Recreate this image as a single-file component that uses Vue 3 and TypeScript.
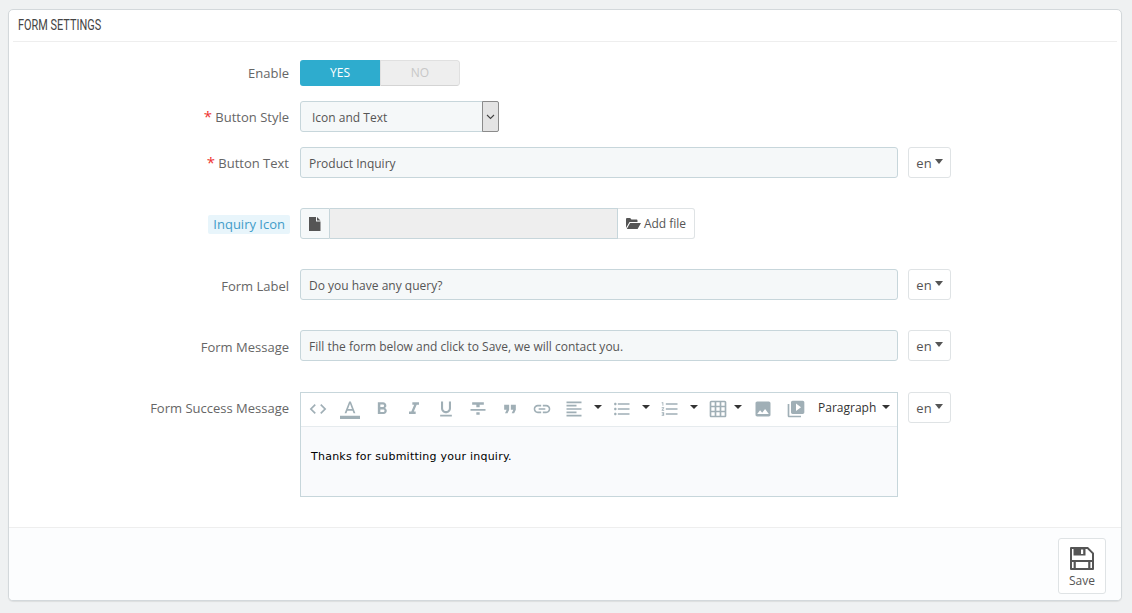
<script setup lang="ts">
interface Tool { name: string; d: string; kind: string }
const tools: Tool[] = [
  { name: 'code', kind: 'btn', d: 'M9.4 16.6L4.8 12l4.6-4.6L8 6l-6 6 6 6 1.4-1.4zm5.2 0l4.6-4.6-4.6-4.6L16 6l6 6-6 6-1.4-1.4z' },
  { name: 'color', kind: 'btn', d: 'M11 3L5.5 17h2.25l1.12-3h6.25l1.12 3h2.25L13 3h-2zm-1.38 9L12 5.67 14.38 12H9.62zM0 20h24v4H0z' },
  { name: 'bold', kind: 'btn', d: 'M15.6 10.79c.97-.67 1.65-1.77 1.65-2.79 0-2.26-1.75-4-4-4H7v14h7.04c2.09 0 3.71-1.7 3.71-3.79 0-1.52-.86-2.82-2.15-3.42zM10 6.5h3c.83 0 1.5.67 1.5 1.5s-.67 1.5-1.5 1.5h-3v-3zm3.5 9H10v-3h3.5c.83 0 1.5.67 1.5 1.5s-.67 1.5-1.5 1.5z' },
  { name: 'italic', kind: 'btn', d: 'M10 4v3h2.21l-3.42 8H6v3h8v-3h-2.21l3.42-8H18V4z' },
  { name: 'underline', kind: 'btn', d: 'M12 17c3.31 0 6-2.69 6-6V3h-2.5v8c0 1.93-1.57 3.5-3.5 3.5S8.5 12.93 8.5 11V3H6v8c0 3.31 2.69 6 6 6zm-7 2v2h14v-2H5z' },
  { name: 'strike', kind: 'btn', d: 'M10 19h4v-3h-4v3zM5 4v3h5v3h4V7h5V4H5zM3 14h18v-2H3v2z' },
  { name: 'quote', kind: 'btn', d: 'M6 17h3l2-4V7H5v6h3zm8 0h3l2-4V7h-6v6h3z' },
  { name: 'link', kind: 'btn', d: 'M3.9 12c0-1.71 1.39-3.1 3.1-3.1h4V7H7c-2.76 0-5 2.24-5 5s2.24 5 5 5h4v-1.9H7c-1.71 0-3.1-1.39-3.1-3.1zM8 13h8v-2H8v2zm9-6h-4v1.9h4c1.71 0 3.1 1.39 3.1 3.1s-1.39 3.1-3.1 3.1h-4V17h4c2.76 0 5-2.24 5-5s-2.24-5-5-5z' },
  { name: 'align', kind: 'btn caret', d: 'M15 15H3v2h12v-2zm0-8H3v2h12V7zM3 13h18v-2H3v2zm0 8h18v-2H3v2zM3 3v2h18V3H3z' },
  { name: 'bullets', kind: 'btn caret', d: 'M4 10.5c-.83 0-1.5.67-1.5 1.5s.67 1.5 1.5 1.5 1.5-.67 1.5-1.5-.67-1.5-1.5-1.5zm0-6c-.83 0-1.5.67-1.5 1.5S3.17 7.5 4 7.5 5.5 6.83 5.5 6 4.83 4.5 4 4.5zm0 12c-.83 0-1.5.68-1.5 1.5s.68 1.5 1.5 1.5 1.5-.68 1.5-1.5-.67-1.5-1.5-1.5zM7 19h14v-2H7v2zm0-6h14v-2H7v2zm0-8v2h14V5H7z' },
  { name: 'numbers', kind: 'btn caret', d: 'M2 17h2v.5H3v1h1v.5H2v1h3v-4H2v1zm1-9h1V4H2v1h1v3zm-1 3h1.8L2 13.1v.9h3v-1H3.2L5 10.9V10H2v1zm5-6v2h14V5H7zm0 14h14v-2H7v2zm0-6h14v-2H7v2z' },
  { name: 'table', kind: 'btn caret-narrow', d: 'M20 2H4c-1.1 0-2 .9-2 2v16c0 1.1.9 2 2 2h16c1.1 0 2-.9 2-2V4c0-1.1-.9-2-2-2zM8 20H4v-4h4v4zm0-6H4v-4h4v4zm0-6H4V4h4v4zm6 12h-4v-4h4v4zm0-6h-4v-4h4v4zm0-6h-4V4h4v4zm6 12h-4v-4h4v4zm0-6h-4v-4h4v4zm0-6h-4V4h4v4z' },
  { name: 'image', kind: 'btn push', d: 'M21 19V5c0-1.1-.9-2-2-2H5c-1.1 0-2 .9-2 2v14c0 1.1.9 2 2 2h14c1.1 0 2-.9 2-2zM8.5 13.5l2.5 3.01L14.5 12l4.5 6H5l3.5-4.5z' },
  { name: 'video', kind: 'btn push-1', d: 'M4 6H2v14c0 1.1.9 2 2 2h14v-2H4V6zm16-4H8c-1.1 0-2 .9-2 2v12c0 1.1.9 2 2 2h12c1.1 0 2-.9 2-2V4c0-1.1-.9-2-2-2zm-8 12.5v-9l6 4.5-6 4.5z' },
]
</script>

<template>
  <div class="page">
    <section class="panel">
      <h3 class="heading"><span class="heading-text">Form Settings</span></h3>
      <div class="form">
        <div class="row">
          <label class="label">Enable</label>
          <div class="switch">
            <span class="opt on">YES</span>
            <span class="opt off">NO</span>
          </div>
        </div>

        <div class="row gap15">
          <label class="label"><b class="req">*</b> Button Style</label>
          <div class="select">
            <span class="select-text">Icon and Text</span>
            <span class="select-arrow">
              <svg width="9" height="6" viewBox="0 0 9 6"><path d="M1 1l3.5 3.5L8 1" fill="none" stroke="#444" stroke-width="1.1" /></svg>
            </span>
          </div>
        </div>

        <div class="row gap15">
          <label class="label"><b class="req">*</b> Button Text</label>
          <input class="input" value="Product Inquiry" readonly />
          <button class="lang">en<i class="tri"></i></button>
        </div>

        <div class="row gap30">
          <label class="label low"><span class="hint">Inquiry Icon</span></label>
          <div class="file">
            <span class="file-icon">
              <svg width="12" height="14" viewBox="0 0 12 14"><path d="M0 0h7v4.500h4.500V14H0zM8 0l3.500 3.500H8z" fill="#555" /></svg>
            </span>
            <span class="file-name"></span>
            <button class="file-btn">
              <svg width="15" height="11" viewBox="0 0 15 11"><path d="M0 10V1.200C0 .5.500 0 1.200 0h3l1.200 1.500h5c.7 0 1.100.5 1.100 1.100V4H3.500L0 10zm.8 1l3.300-6H15l-3.400 6H.8z" fill="#555" /></svg>
              Add file
            </button>
          </div>
        </div>

        <div class="row gap30">
          <label class="label low">Form Label</label>
          <input class="input" value="Do you have any query?" readonly />
          <button class="lang">en<i class="tri"></i></button>
        </div>

        <div class="row gap30">
          <label class="label low">Form Message</label>
          <input class="input" value="Fill the form below and click to Save, we will contact you." readonly />
          <button class="lang">en<i class="tri"></i></button>
        </div>

        <div class="row gap31 top">
          <label class="label editor-label">Form Success Message</label>
          <div class="editor">
            <div class="toolbar">
              <template v-for="t in tools" :key="t.name">
                <span class="tool" :class="t.kind">
                  <svg width="20" height="20" viewBox="0 0 24 24"><path :d="t.d" fill="#a0afb6" /></svg>
                </span>
                <span v-if="t.kind.includes('caret-narrow')" class="caret-box narrow"><i class="tri dark"></i></span>
                <span v-else-if="t.kind.includes('caret')" class="caret-box"><i class="tri dark"></i></span>
              </template>
              <span class="para">Paragraph<i class="tri dark para-tri"></i></span>
            </div>
            <div class="content">Thanks for submitting your inquiry.</div>
          </div>
          <button class="lang">en<i class="tri"></i></button>
        </div>
      </div>

      <footer class="footer">
        <button class="save">
          <svg width="24" height="24" viewBox="0 0 24 24">
            <path fill-rule="evenodd" fill="#555" d="M1 0H18l6 6V22a1 1 0 0 1-1 1H1a1 1 0 0 1-1-1V1a1 1 0 0 1 1-1zM2 2h1.500v6.500h12V2h1.700L22 6.800V13H2zM5.800 15h12.400v6H5.800zM11 2.500h2.200V7H11zM2 15h1.600v6H2zM20.400 15H22v6h-1.600z" />
          </svg>
          <span>Save</span>
        </button>
      </footer>
    </section>
  </div>
</template>

<style>
html, body { margin: 0; background: #eff1f2; }
</style>

<style scoped>
.page {
  min-height: 613px;
  box-sizing: border-box;
  padding: 9px 10px 0 8px;
  font-family: "Open Sans", "Liberation Sans", sans-serif;
  font-size: 13px;
  color: #555;
}
.panel {
  height: 592px;
  box-sizing: border-box;
  display: flex;
  flex-direction: column;
  background: #fff;
  border: 1px solid #d3d8db;
  border-radius: 5px;
  box-shadow: 0 1px 1px rgba(0, 0, 0, .08);
  overflow: hidden;
}
.heading {
  margin: 0 4px;
  height: 31px;
  line-height: 30px;
  padding-left: 5px;
  border-bottom: 1px solid #eee;
  font-family: Roboto, sans-serif;
  font-size: 14px;
  font-weight: 400;
  text-transform: uppercase;
  color: #444;
  box-sizing: content-box;
}
.heading-text {
  display: inline-block;
  transform: scaleX(.78);
  transform-origin: left center;
}
.form {
  flex: 1;
  padding-top: 18px;
}
.row {
  display: flex;
  align-items: center;
}
.row.top { align-items: flex-start; }
.gap15 { margin-top: 15px; }
.gap30 { margin-top: 30px; }
.gap31 { margin-top: 31px; }
.label {
  width: 280px;
  margin-right: 11px;
  text-align: right;
  color: #666;
  line-height: 18px;
  flex: none;
}
.label.low { padding-top: 2px; }
.editor-label { margin-top: 7px; }
.req { color: #e33; font-weight: 400; font-size: 15px; }
.hint {
  display: inline-block;
  background: #e8f5fb;
  color: #3f9cc9;
  padding: 0 5px 0 5px;
  margin-right: -1px;
  height: 19px;
  line-height: 19px;
  border-radius: 2px;
}
.switch {
  display: flex;
  width: 160px;
  height: 26px;
  border-radius: 3px;
  overflow: hidden;
}
.opt {
  width: 80px;
  text-align: center;
  line-height: 26px;
  font-size: 12px;
}
.opt.on { background: #2eacce; color: #fff; }
.opt.off {
  background: #eee;
  color: #c7c7c7;
  box-sizing: border-box;
  border: 1px solid #e0e0e0;
  border-bottom-color: #d4d4d4;
  line-height: 24px;
  border-radius: 0 3px 3px 0;
}
.select {
  width: 199px;
  height: 31px;
  box-sizing: border-box;
  display: flex;
  background: #f5f8f9;
  border: 1px solid #c7d6db;
  border-radius: 3px;
}
.select-text {
  flex: 1;
  line-height: 31px;
  padding-left: 11px;
  font-size: 12px;
}
.select-arrow {
  width: 17px;
  background: #e4e4e4;
  border: 1px solid #8b8b8b;
  border-radius: 0 2px 2px 0;
  display: flex;
  align-items: center;
  justify-content: center;
  box-sizing: border-box;
  margin: -1px -1px -1px 0;
}
.input {
  width: 598px;
  height: 31px;
  box-sizing: border-box;
  padding: 1px 8px 0;
  margin: 0;
  font: inherit;
  font-size: 12px;
  color: #555;
  background: #f5f8f9;
  border: 1px solid #c7d6db;
  border-radius: 3px;
  outline: none;
  flex: none;
}
.lang {
  margin-left: 10px;
  width: 43px;
  height: 31px;
  padding: 0;
  box-sizing: border-box;
  display: flex;
  align-items: center;
  justify-content: center;
  gap: 3px;
  font: inherit;
  color: #555;
  background: #fff;
  border: 1px solid #dfe3e5;
  border-radius: 3px;
  flex: none;
}
.lang .tri { margin-top: -2px; }
.tri {
  display: inline-block;
  width: 0;
  height: 0;
  border-left: 4px solid transparent;
  border-right: 4px solid transparent;
  border-top: 5px solid #555;
}
.tri.dark { border-top-color: #333; border-top-width: 4px; }
.file {
  width: 395px;
  height: 31px;
  display: flex;
}
.file-icon {
  width: 30px;
  box-sizing: border-box;
  display: flex;
  align-items: center;
  justify-content: center;
  background: #f5f8f9;
  border: 1px solid #c7d6db;
  border-radius: 3px 0 0 3px;
}
.file-name {
  width: 288px;
  box-sizing: border-box;
  background: #eee;
  border: 1px solid #c7d6db;
  border-left: 0;
}
.file-btn {
  width: 77px;
  box-sizing: border-box;
  padding: 0;
  display: flex;
  align-items: center;
  justify-content: center;
  gap: 3px;
  font: inherit;
  font-size: 12px;
  color: #555;
  background: #fff;
  border: 1px solid #dfe3e5;
  border-left: 0;
  border-radius: 0 3px 3px 0;
}
.editor {
  width: 598px;
  height: 105px;
  box-sizing: border-box;
  display: flex;
  flex-direction: column;
  border: 1px solid #c7d6db;
  flex: none;
}
.toolbar {
  height: 33px;
  display: flex;
  align-items: center;
  padding-left: 1px;
  background: #fff;
  border-bottom: 1px solid #e6ebee;
  box-sizing: content-box;
}
.tool {
  width: 32px;
  height: 20px;
  display: flex;
  align-items: center;
  justify-content: center;
  flex: none;
  margin-top: -2px;
}
.push { margin-left: 5px; }
.push-1 { margin-left: 1px; }
.caret-box {
  width: 16px;
  display: flex;
  justify-content: center;
  margin-top: -5px;
}
.caret-box.narrow { width: 8px; }
.para {
  margin-left: 6px;
  font-size: 12px;
  color: #333;
  display: flex;
  align-items: center;
  margin-top: -5px;
}
.para-tri { margin-left: 6px; }
.content {
  flex: 1;
  background: #f9fafc;
  padding: 23px 10px 0;
  font-family: "DejaVu Sans", sans-serif;
  font-size: 11px;
  letter-spacing: .24px;
  line-height: 14px;
  color: #000;
}
.footer {
  height: 73px;
  box-sizing: border-box;
  padding: 10px 15px 0 0;
  display: flex;
  justify-content: flex-end;
  align-items: flex-start;
  background: #fcfdfe;
  border-top: 1px solid #eee;
}
.save {
  width: 48px;
  height: 56px;
  box-sizing: border-box;
  padding: 8px 0 0;
  display: flex;
  flex-direction: column;
  align-items: center;
  gap: 1px;
  font: inherit;
  font-size: 12px;
  color: #555;
  background: #fff;
  border: 1px solid #dfe3e5;
  border-radius: 3px;
}
</style>
